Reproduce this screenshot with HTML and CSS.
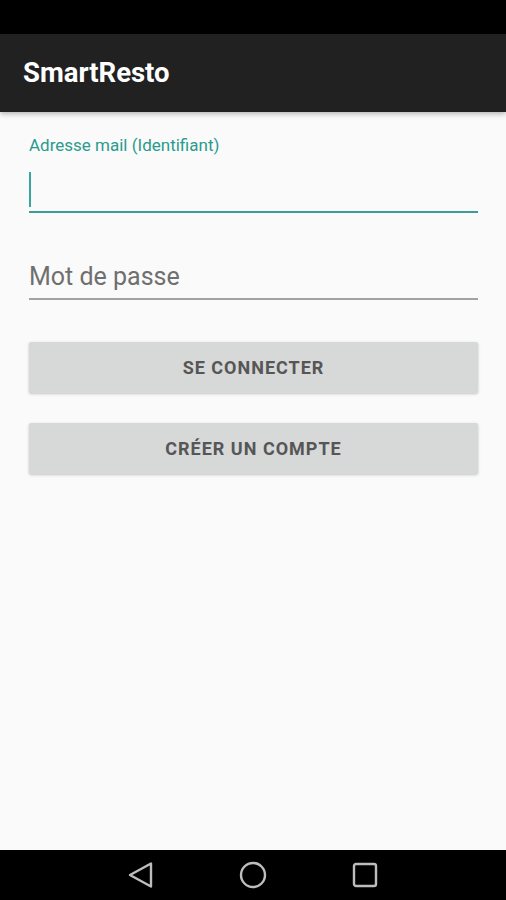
FILE: index.html
```html
<!DOCTYPE html>
<html lang="fr">
<head>
<meta charset="utf-8">
<title>SmartResto</title>
<link rel="stylesheet" href="styles.css">
</head>
<body>
<div class="status"></div>
<header class="appbar"><h1 class="title">SmartResto</h1></header>
<main class="content">
  <div class="field field-active">
    <div class="field-label">Adresse mail (Identifiant)</div>
    <div class="field-input"><span class="cursor"></span></div>
  </div>
  <div class="field field-idle">
    <div class="field-placeholder">Mot de passe</div>
  </div>
  <button class="btn btn-first">SE CONNECTER</button>
  <button class="btn">CRÉER UN COMPTE</button>
</main>
<nav class="navbar">
  <svg class="nav-icon" width="28" height="28" viewBox="0 0 28 28"><path d="M24 2.5 L24 25.5 L3 14 Z" fill="none" stroke="#bdbdbd" stroke-width="2.4" stroke-linejoin="round"/></svg>
  <svg class="nav-icon" width="28" height="28" viewBox="0 0 28 28"><circle cx="14" cy="14" r="12" fill="none" stroke="#bdbdbd" stroke-width="2.4"/></svg>
  <svg class="nav-icon" width="28" height="28" viewBox="0 0 28 28"><rect x="3" y="3" width="22" height="22" rx="2" fill="none" stroke="#bdbdbd" stroke-width="2.4"/></svg>
</nav>
</body>
</html>
```

FILE: styles.css
```css
html, body {
  margin: 0;
  padding: 0;
}
body {
  width: 506px;
  height: 900px;
  display: flex;
  flex-direction: column;
  background: #fafafa;
  font-family: Roboto, "Noto Sans", Arial, sans-serif;
  overflow: hidden;
}
.status {
  height: 34px;
  background: #000;
  flex: none;
}
.appbar {
  height: 78px;
  flex: none;
  background: #212121;
  display: flex;
  align-items: center;
  padding-left: 23px;
  box-shadow: 0 2px 5px rgba(0,0,0,0.28);
  position: relative;
  z-index: 1;
}
.title {
  margin: 0;
  color: #fff;
  font-size: 27.5px;
  font-weight: 700;
  line-height: 32px;
  letter-spacing: 0;
}
.content {
  flex: 1;
  padding: 23px 28px 0 29px;
  display: flex;
  flex-direction: column;
}
.field-label {
  color: #2a9a8e;
  font-size: 17px;
  line-height: 20px;
}
.field-input {
  padding-top: 17px;
  padding-bottom: 4px;
  border-bottom: 2px solid #3a9e94;
  display: flex;
}
.cursor {
  width: 2px;
  height: 35px;
  background: #3aa59a;
}
.field-idle {
  margin-top: 49px;
  padding-bottom: 6px;
  border-bottom: 2px solid #a2a2a2;
}
.field-placeholder {
  color: #6f6f6f;
  font-size: 25px;
  line-height: 30px;
}
.btn {
  height: 51px;
  border: none;
  border-radius: 2px;
  background: #d7d8d8;
  color: #565656;
  font-family: Roboto, "Noto Sans", Arial, sans-serif;
  font-size: 18px;
  font-weight: 700;
  letter-spacing: 1px;
  box-shadow: 0 1px 3px rgba(0,0,0,0.22);
  margin-top: 30px;
  padding: 0;
}
.btn-first {
  margin-top: 42px;
}
.navbar {
  height: 50px;
  flex: none;
  background: #000;
  display: flex;
  align-items: center;
  justify-content: center;
  gap: 84px;
}
.nav-icon {
  display: block;
}
```
